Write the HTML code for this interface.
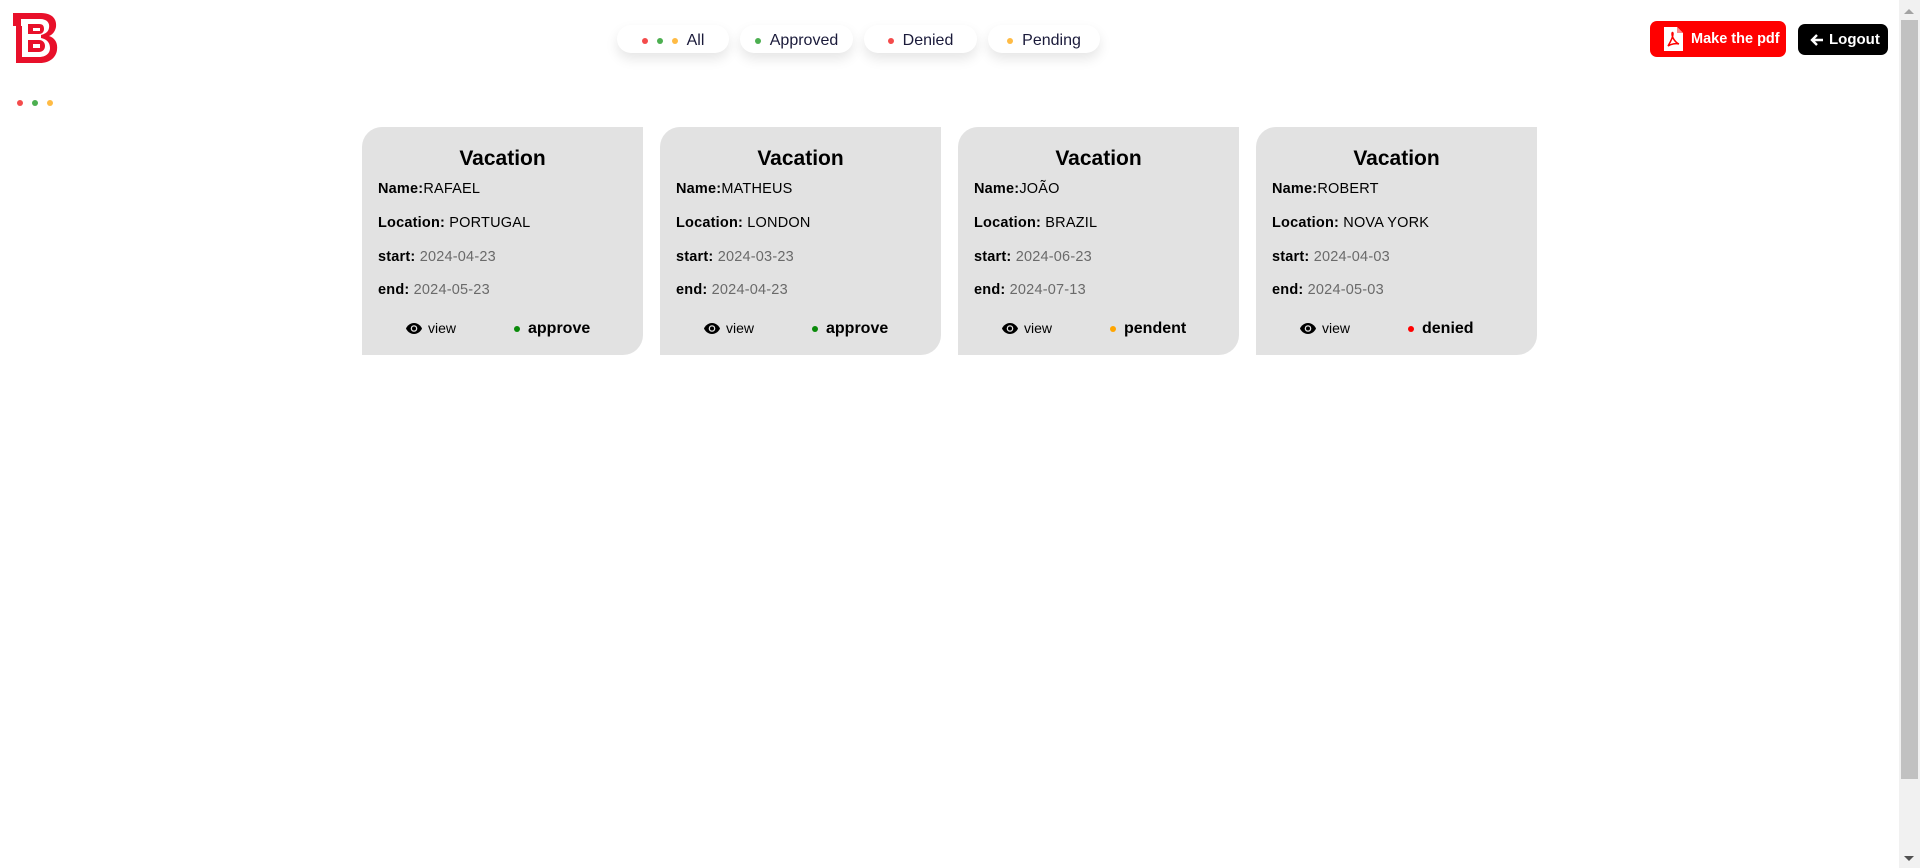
<!DOCTYPE html>
<html><head><meta charset="utf-8"><style>
*{margin:0;padding:0;box-sizing:border-box}
body{width:1920px;height:868px;background:#fff;font-family:"Liberation Sans",sans-serif;position:relative;overflow:hidden}
.pill{position:absolute;top:25px;height:28px;background:#fff;border-radius:14px;box-shadow:0 6px 12px rgba(0,0,0,.1);display:flex;align-items:center;justify-content:center;font-size:16px;color:#1a1a3a;padding-top:3px}
.d{display:inline-block;width:6px;height:6px;border-radius:50%;margin-right:9px}
.r{background:#f44b4b}.g{background:#4caf50}.y{background:#ffbb44}
.card{position:absolute;top:127px;width:281px;height:228px;background:#e2e2e2;border-radius:20px 0 20px 0;color:#000}
.card h2{position:absolute;top:20px;left:0;width:100%;text-align:center;font-size:21px;font-weight:bold}
.row{position:absolute;left:16px;font-size:14.5px;letter-spacing:.2px}
.row b{font-weight:bold}
.gr{color:#6a6a6a}
.bot{position:absolute;top:193px;font-size:15px;display:flex;align-items:center}
.view{left:44px;font-size:14px}
.view svg{margin-right:6px}
.st{left:152px;font-weight:bold;font-size:16px}
.st .d{width:6px;height:6px;margin-right:8px}
</style></head><body>
<svg style="position:absolute;left:11px;top:10px" width="48" height="56" viewBox="0 0 48 56">
<path d="M2 3 H30 C42 3 46 10 45 17 C44 22 41 25 38 26 C44 28 47 33 46 40 C45 48 38 53 29 53 H5 V16 H2 Z" fill="#e8102a"/>
<path d="M10 9 H29 C36 9 39 13 38 18 C37 23 33 24 30 25 L30 28 C35 29 39 32 39 38 C39 44 34 47 28 47 H11 V16 H10 Z" fill="#fff"/>
<path d="M17 14 H28 C32 14 33 16 33 19 C33 22 31 24 28 24 H17 Z M17 30 H28 C32 30 34 33 34 36 C34 40 31 42 28 42 H17 Z" fill="#e8102a"/>
<rect x="22" y="18" width="7" height="3" fill="#fff"/><rect x="22" y="34" width="7" height="4" fill="#fff"/>
</svg>
<div style="position:absolute;top:100px;left:17px;display:flex;gap:9px"><span class="d r" style="margin:0"></span><span class="d g" style="margin:0"></span><span class="d y" style="margin:0"></span></div>

<div class="pill" style="left:617px;width:112px"><span class="d r"></span><span class="d g"></span><span class="d y"></span>All</div>
<div class="pill" style="left:740px;width:113px"><span class="d g"></span>Approved</div>
<div class="pill" style="left:864px;width:113px"><span class="d r"></span>Denied</div>
<div class="pill" style="left:988px;width:112px"><span class="d y"></span>Pending</div>

<div style="position:absolute;left:1650px;top:21px;width:136px;height:36px;background:#ff0000;border-radius:7px;color:#fff;font-weight:bold;font-size:14.5px;display:flex;align-items:center;padding-left:14px">
<svg width="19" height="24" viewBox="0 0 19 24" style="margin-right:8px"><path d="M0 0H13L19 6V24H0Z" fill="#fff"/><path d="M13 0V6H19" fill="#f88"/><path d="M4 19 C7 14 9 10 9 7 C9 5 8 5 8 7 C8 11 12 16 15 17 C12 16 7 17 4 19Z" fill="none" stroke="#f00" stroke-width="1.5"/></svg>Make the pdf</div>
<div style="position:absolute;left:1798px;top:24px;width:90px;height:31px;background:#000;border-radius:7px;color:#fff;font-weight:bold;font-size:15px;display:flex;align-items:center;padding-left:12px">
<svg width="14" height="14" viewBox="0 0 14 14" style="margin-right:5px"><path d="M13 7H2M7 2L2 7L7 12" stroke="#fff" stroke-width="2.4" fill="none"/></svg>Logout</div>

<div style="position:absolute;left:1899px;top:0;width:21px;height:868px;background:#f1f1f1"></div>
<div style="position:absolute;left:1901px;top:20px;width:17px;height:759px;background:#c1c1c1"></div>
<div style="position:absolute;left:1904px;top:9px;border:5px solid transparent;border-bottom-color:#a3a3a3;border-top:0;width:0"></div>
<div style="position:absolute;left:1904px;top:856px;border:5px solid transparent;border-top-color:#505050;border-bottom:0;width:0"></div>

<svg width="0" height="0" style="position:absolute"><defs><symbol id="eye" viewBox="0 0 16 11"><path d="M8 0C4 0 1 3 0 5.5 1 8 4 11 8 11s7-3 8-5.5C15 3 12 0 8 0z" fill="#000"/><circle cx="8" cy="5.5" r="3.3" fill="#e2e2e2"/><circle cx="8" cy="5.5" r="2" fill="#000"/></symbol></defs></svg>

<div class="card" style="left:362px"><h2>Vacation</h2>
<div class="row" style="top:54px"><b>Name:</b>RAFAEL</div>
<div class="row" style="top:88px"><b>Location:</b> PORTUGAL</div>
<div class="row" style="top:122px"><b>start:</b> <span class="gr">2024-04-23</span></div>
<div class="row" style="top:155px"><b>end:</b> <span class="gr">2024-05-23</span></div>
<div class="bot view"><svg width="16" height="11"><use href="#eye"/></svg>view</div><div class="bot st"><span class="d" style="background:#0a8a0a"></span>approve</div></div>

<div class="card" style="left:660px"><h2>Vacation</h2>
<div class="row" style="top:54px"><b>Name:</b>MATHEUS</div>
<div class="row" style="top:88px"><b>Location:</b> LONDON</div>
<div class="row" style="top:122px"><b>start:</b> <span class="gr">2024-03-23</span></div>
<div class="row" style="top:155px"><b>end:</b> <span class="gr">2024-04-23</span></div>
<div class="bot view"><svg width="16" height="11"><use href="#eye"/></svg>view</div><div class="bot st"><span class="d" style="background:#0a8a0a"></span>approve</div></div>

<div class="card" style="left:958px"><h2>Vacation</h2>
<div class="row" style="top:54px"><b>Name:</b>JOÃO</div>
<div class="row" style="top:88px"><b>Location:</b> BRAZIL</div>
<div class="row" style="top:122px"><b>start:</b> <span class="gr">2024-06-23</span></div>
<div class="row" style="top:155px"><b>end:</b> <span class="gr">2024-07-13</span></div>
<div class="bot view"><svg width="16" height="11"><use href="#eye"/></svg>view</div><div class="bot st"><span class="d" style="background:#ffa500"></span>pendent</div></div>

<div class="card" style="left:1256px"><h2>Vacation</h2>
<div class="row" style="top:54px"><b>Name:</b>ROBERT</div>
<div class="row" style="top:88px"><b>Location:</b> NOVA YORK</div>
<div class="row" style="top:122px"><b>start:</b> <span class="gr">2024-04-03</span></div>
<div class="row" style="top:155px"><b>end:</b> <span class="gr">2024-05-03</span></div>
<div class="bot view"><svg width="16" height="11"><use href="#eye"/></svg>view</div><div class="bot st"><span class="d" style="background:#ff0000"></span>denied</div></div>
</body></html>
